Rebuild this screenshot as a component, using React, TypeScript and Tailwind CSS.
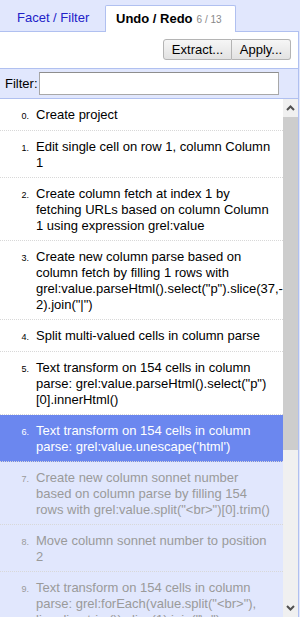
import React from "react";

type Item = { n: number; lines: string[]; state: "done" | "current" | "future" };

const items: Item[] = [
  { n: 0, lines: ["Create project"], state: "done" },
  { n: 1, lines: ["Edit single cell on row 1, column Column", "1"], state: "done" },
  {
    n: 2,
    lines: [
      "Create column fetch at index 1 by",
      "fetching URLs based on column Column",
      "1 using expression grel:value",
    ],
    state: "done",
  },
  {
    n: 3,
    lines: [
      "Create new column parse based on",
      "column fetch by filling 1 rows with",
      'grel:value.parseHtml().select("p").slice(37,-',
      '2).join("|")',
    ],
    state: "done",
  },
  { n: 4, lines: ["Split multi-valued cells in column parse"], state: "done" },
  {
    n: 5,
    lines: [
      "Text transform on 154 cells in column",
      'parse: grel:value.parseHtml().select("p")',
      "[0].innerHtml()",
    ],
    state: "done",
  },
  {
    n: 6,
    lines: ["Text transform on 154 cells in column", "parse: grel:value.unescape('html')"],
    state: "current",
  },
  {
    n: 7,
    lines: [
      "Create new column sonnet number",
      "based on column parse by filling 154",
      'rows with grel:value.split("<br>")[0].trim()',
    ],
    state: "future",
  },
  { n: 8, lines: ["Move column sonnet number to position", "2"], state: "future" },
  {
    n: 9,
    lines: [
      "Text transform on 154 cells in column",
      'parse: grel:forEach(value.split("<br>"),',
      'line, line.trim()).slice(1).join("\\n")',
    ],
    state: "future",
  },
];

function Row({ item }: { item: Item }) {
  const cls =
    item.state === "current"
      ? "bg-[#6b87ef] text-white"
      : item.state === "future"
      ? "bg-[#e1e7fd] text-[#9a9a9a]"
      : "bg-white text-black";
  return (
    <div
      className={`flex items-baseline pt-[8px] pb-[6px] border-b border-dotted border-[#d8d8d8] leading-[16px] ${cls}`}
    >
      <div className="w-[36px] shrink-0 pr-[7px] text-right text-[9px]">{item.n}.</div>
      <div className="w-[247px] shrink-0 whitespace-nowrap">
        {item.lines.map((l, i) => (
          <div key={i}>{l}</div>
        ))}
      </div>
    </div>
  );
}

export default function App() {
  return (
    <div className="w-[300px] h-[617px] overflow-hidden bg-[#e1e7fd] font-['Liberation_Sans',Arial,sans-serif] text-[13px] text-black">
      <div className="w-[299px] flex flex-col h-[617px]">
        {/* Tabs */}
        <div className="flex h-[32px] pt-[5px] shrink-0">
          <div className="flex items-center pl-[17px] pr-[14px] w-[105px] border-b border-[#b0c0f0] text-[#2222c8]">
            Facet / Filter
          </div>
          <div className="flex items-center pl-[10px] pr-[10px] w-[131px] bg-white border border-b-0 border-[#b0c0f0] rounded-t-[2px]">
            <span className="font-bold">Undo / Redo</span>
            <span className="ml-[4px] text-[10px] text-[#888]">6 / 13</span>
          </div>
          <div className="flex-1 border-b border-[#b0c0f0]" />
        </div>
        {/* Panel */}
        <div className="flex-1 flex flex-col border-r border-[#b0c0f0] min-h-0">
          <div className="h-[36px] bg-white flex justify-end items-start pt-[7px] pr-[7px] shrink-0">
            <button className="h-[21px] px-[7px] border border-[#b4b4b4] rounded-l-[3px] bg-gradient-to-b from-[#f6f6f6] to-[#e2e2e2] text-[13px] leading-none w-[69px]">
              Extract...
            </button>
            <button className="h-[21px] px-[7px] border border-l-0 border-[#b4b4b4] rounded-r-[3px] bg-gradient-to-b from-[#f6f6f6] to-[#e2e2e2] text-[13px] leading-none w-[59px]">
              Apply...
            </button>
          </div>
          <div className="h-[31px] border-t border-b border-[#b0c0f0] bg-[#e1e7fd] flex items-start pt-[3px] pl-[5px] shrink-0">
            <span className="leading-[23px]">Filter:</span>
            <div className="ml-[1px] w-[240px] h-[23px] bg-white border border-[#a8a8a8] border-t-[#8e8e8e]" />
          </div>
          <div className="flex flex-1 min-h-0">
            <div className="w-[283px] overflow-hidden">
              {items.map((it) => (
                <Row key={it.n} item={it} />
              ))}
            </div>
            <div className="w-[15px] flex flex-col bg-[#f0f0f0]">
              <div className="h-[18px] flex items-center justify-center shrink-0">
                <svg width="9" height="6" viewBox="0 0 9 6">
                  <path d="M1 5 L4.5 1.5 L8 5" stroke="#505050" strokeWidth="2" fill="none" />
                </svg>
              </div>
              <div className="h-[333px] bg-[#cdcdcd] shrink-0" />
              <div className="flex-1" />
              <div className="h-[18px] flex items-center justify-center shrink-0">
                <svg width="9" height="6" viewBox="0 0 9 6">
                  <path d="M1 1 L4.5 4.5 L8 1" stroke="#505050" strokeWidth="2" fill="none" />
                </svg>
              </div>
            </div>
          </div>
        </div>
      </div>
    </div>
  );
}
